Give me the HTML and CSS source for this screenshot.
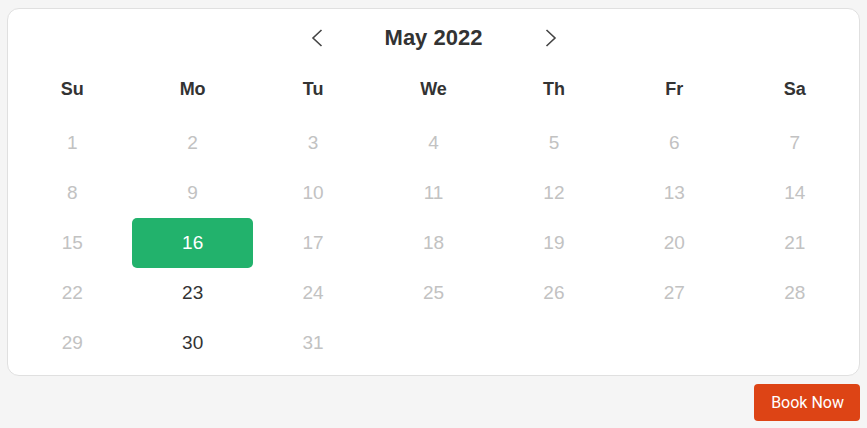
FILE: index.html
```html
<!DOCTYPE html>
<html>
<head>
<meta charset="utf-8">
<link rel="stylesheet" href="styles.css">
</head>
<body>
<div class="page">
  <div class="card">
    <div class="nav">
      <span class="arrow"><svg width="24" height="24" viewBox="0 0 24 24"><path d="M16.5 4 L8 12 L16.5 20" fill="none" stroke="#444" stroke-width="1.6"/></svg></span>
      <span class="title">May 2022</span>
      <span class="arrow"><svg width="24" height="24" viewBox="0 0 24 24"><path d="M7.5 4 L16 12 L7.5 20" fill="none" stroke="#444" stroke-width="1.6"/></svg></span>
    </div>
    <div class="grid">
      <div class="wd">Su</div><div class="wd">Mo</div><div class="wd">Tu</div><div class="wd">We</div><div class="wd">Th</div><div class="wd">Fr</div><div class="wd">Sa</div>
      <div class="d off">1</div><div class="d off">2</div><div class="d off">3</div><div class="d off">4</div><div class="d off">5</div><div class="d off">6</div><div class="d off">7</div>
      <div class="d off">8</div><div class="d off">9</div><div class="d off">10</div><div class="d off">11</div><div class="d off">12</div><div class="d off">13</div><div class="d off">14</div>
      <div class="d off">15</div><div class="d sel">16</div><div class="d off">17</div><div class="d off">18</div><div class="d off">19</div><div class="d off">20</div><div class="d off">21</div>
      <div class="d off">22</div><div class="d on">23</div><div class="d off">24</div><div class="d off">25</div><div class="d off">26</div><div class="d off">27</div><div class="d off">28</div>
      <div class="d off">29</div><div class="d on">30</div><div class="d off">31</div>
    </div>
  </div>
  <div class="actions">
    <button class="book">Book Now</button>
  </div>
</div>
</body>
</html>
```

FILE: styles.css
```css
html, body {
  margin: 0;
  padding: 0;
  background: #f5f5f5;
}
.page {
  padding: 8px 7px 0 7px;
}
.card {
  background: #fff;
  border: 1px solid #e0e0e0;
  border-radius: 12px;
  padding: 9px 4px 7px 4px;
  font-family: "Liberation Sans", Arial, sans-serif;
}
.nav {
  height: 40px;
  display: flex;
  align-items: center;
  justify-content: center;
  gap: 40px;
}
.arrow {
  width: 24px;
  height: 24px;
  display: flex;
}
.title {
  width: 130px;
  text-align: center;
  font-size: 22px;
  font-weight: bold;
  color: #333;
}
.grid {
  display: grid;
  grid-template-columns: repeat(7, 1fr);
  grid-template-rows: 60px repeat(5, 50px);
}
.wd {
  display: flex;
  align-items: center;
  justify-content: center;
  padding-top: 2px;
  font-size: 18px;
  font-weight: bold;
  color: #333;
}
.d {
  display: flex;
  align-items: center;
  justify-content: center;
  font-size: 19px;
}
.off { color: #c2c2c2; }
.on { color: #333; }
.sel {
  background: #22b26c;
  color: #fff;
  border-radius: 5px;
}
.actions {
  display: flex;
  justify-content: flex-end;
  padding-top: 8px;
}
.book {
  height: 37px;
  padding: 0 16px 0 17px;
  border: none;
  border-radius: 4px;
  background: #dd4415;
  color: #fff;
  font-family: Roboto, "Liberation Sans", sans-serif;
  font-size: 16px;
}
```
